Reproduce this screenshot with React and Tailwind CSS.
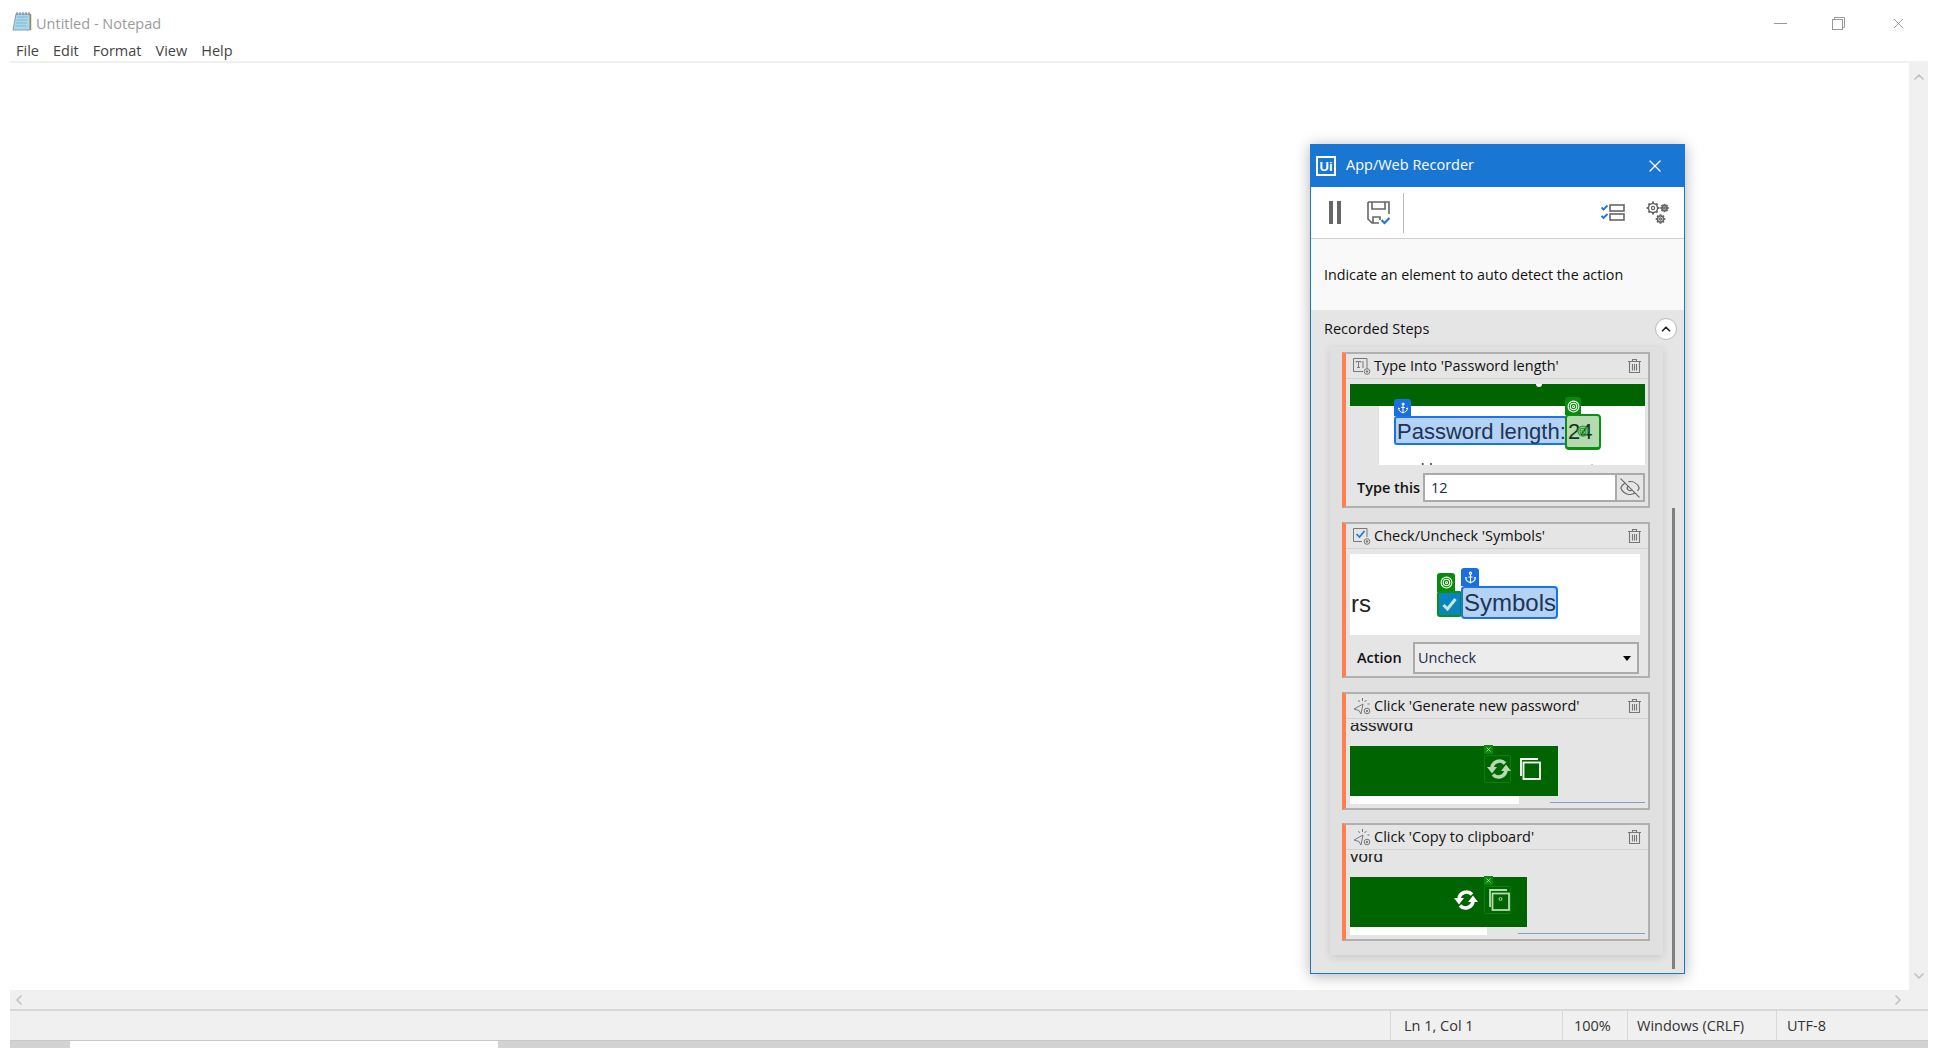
import { Anchor, ChevronDown, ChevronLeft, ChevronRight, ChevronUp, EyeOff, Target, X } from 'lucide-react'

const SEGOE = 'font-["Open_Sans",sans-serif]'
const ARIAL = 'font-["Liberation_Sans",Arial,sans-serif]'

function NotepadIcon() {
  return (
    <svg width="20" height="20" viewBox="0 0 20 20">
      <path d="M4 3h14v16H1z" fill="#a9d8ea" stroke="#7f9fb0" />
      <path d="M5 6h11M4.500 9h11M4 12h11M3.500 15h11" stroke="#7fb6d4" />
      <path d="M5 1v3M8 1v3M11 1v3M14 1v3M17 1v3" stroke="#777" />
      <path d="M18.500 3v16" stroke="#9a8a60" strokeWidth="1.500" />
    </svg>
  )
}

function RestoreIcon() {
  return (
    <svg width="13" height="13" viewBox="0 0 13 13" fill="none" stroke="#999">
      <rect x="0.500" y="2.500" width="10" height="10" fill="#fff" />
      <path d="M2.500 2.500v-2h10v10h-2" />
    </svg>
  )
}

function SaveIcon() {
  return (
    <svg width="24" height="24" viewBox="0 0 24 24" fill="none" stroke="#666" strokeWidth="1.600">
      <path d="M1 1h21v12M12 22H5l-4-4V1" />
      <path d="M5 1v7h13V1M6 22v-6h7v3" />
      <path d="M14.500 19l3 3 5-5" stroke="#1976d2" strokeWidth="2" />
    </svg>
  )
}

function StepsIcon() {
  return (
    <svg width="24" height="17" viewBox="0 0 24 17" fill="none">
      <path d="M0.500 3.500l2 2 4-4M0.500 12l2 2 4-4" stroke="#1976d2" strokeWidth="1.800" />
      <rect x="9" y="1" width="14" height="6" stroke="#666" strokeWidth="1.600" />
      <rect x="9" y="10" width="14" height="6" stroke="#666" strokeWidth="1.600" />
    </svg>
  )
}

function Gear({ x, y, r }) {
  const spokes = [0, 45, 90, 135, 180, 225, 270, 315]
  return (
    <g>
      <circle cx={x} cy={y} r={r} fill="none" stroke="#666" strokeWidth="1.500" />
      <circle cx={x} cy={y} r={r * 0.35} fill="none" stroke="#666" strokeWidth="1.200" />
      {spokes.map(a => (
        <line
          key={a}
          x1={x + r * Math.cos((a * Math.PI) / 180)}
          y1={y + r * Math.sin((a * Math.PI) / 180)}
          x2={x + (r + 1.800) * Math.cos((a * Math.PI) / 180)}
          y2={y + (r + 1.800) * Math.sin((a * Math.PI) / 180)}
          stroke="#666"
          strokeWidth="2"
        />
      ))}
    </g>
  )
}

function GearsIcon() {
  return (
    <svg width="23" height="24" viewBox="0 0 23 24">
      <Gear x={7} y={7} r={4.600} />
      <Gear x={18.500} y={7} r={2.400} />
      <Gear x={14.500} y={18} r={3} />
    </svg>
  )
}

function TrashIcon() {
  return (
    <svg width="13" height="14" viewBox="0 0 13 14" fill="none" stroke="#777" strokeWidth="1.100">
      <path d="M0 2.500h13M4.500 2.500V.5h4v2M1.500 2.500v11h10v-11M4.500 5v6.500M6.500 5v6.500M8.500 5v6.500" />
    </svg>
  )
}

function TypeIcon() {
  return (
    <svg width="18" height="17" viewBox="0 0 18 17" fill="none" stroke="#777">
      <path d="M14 11V.5H.5v13H10" />
      <path d="M3 4.500v-1h5v1M5.500 3.500v6M4 9.500h3M10 3v7" />
      <circle cx="14" cy="13.500" r="2.800" />
      <circle cx="14" cy="13.500" r="0.800" fill="#777" />
    </svg>
  )
}

function CheckIcon() {
  return (
    <svg width="18" height="17" viewBox="0 0 18 17" fill="none" stroke="#777">
      <path d="M14 9V.5H.5v13H9" />
      <path d="M3.500 6l3 3 5-6" stroke="#1976d2" strokeWidth="1.600" />
      <circle cx="14" cy="13.500" r="2.800" />
      <circle cx="14" cy="13.500" r="0.800" fill="#777" />
    </svg>
  )
}

function ClickIcon() {
  return (
    <svg width="18" height="18" viewBox="0 0 18 18" fill="none" stroke="#777">
      <path d="M1 12l9-5-2 10-2-3.500z" />
      <path d="M9.500 1v3M13.500 3l-2 2M5.500 3l1 2M14.500 7h2" />
      <circle cx="14" cy="14" r="2.800" />
      <circle cx="14" cy="14" r="0.800" fill="#777" />
    </svg>
  )
}

function RefreshGlyph({ color, left }) {
  return (
    <svg className="absolute top-[38px]" style={{ left }} width="24" height="24" viewBox="0 0 24 24" fill="none" stroke={color} strokeWidth="3.600">
      <path d="M5 11A7.500 7.500 0 0 1 18 6.500" />
      <path d="M19 13A7.500 7.500 0 0 1 6 17.500" />
      <path d="M0 10h10l-5 6.500z" fill={color} stroke="none" />
      <path d="M14 14h10l-5-6.500z" fill={color} stroke="none" />
    </svg>
  )
}

function CopyGlyph({ size, color, dot }) {
  return (
    <svg width={size} height={size} viewBox="0 0 22 22" fill="none" stroke={color} strokeWidth="1.800">
      <path d="M2 18V1h17" />
      <rect x="4.500" y="4.500" width="16.500" height="16.500" />
      {dot && <circle cx="12.500" cy="10" r="1.500" strokeWidth="1" />}
    </svg>
  )
}

function Tab({ className, children }) {
  return (
    <div className={`absolute flex items-center justify-center rounded-t-[3px] text-white ${className}`}>
      {children}
    </div>
  )
}

function PasswordThumb() {
  return (
    <div className="relative mx-[4px] mt-[5px] h-[81px] w-[295px] overflow-hidden">
      <div className="absolute left-0 top-0 h-[22px] w-[295px] bg-[#006400]" />
      <div className="absolute left-[186px] top-[-3px] size-[6px] rounded-full bg-white" />
      <div className="absolute left-[29px] top-[22px] h-[59px] w-[266px] bg-white" />
      <span className={`absolute left-[71px] top-[77px] text-[15px] leading-none text-[#222] ${ARIAL}`}>ld</span>
      <span className={`absolute left-[240px] top-[77px] text-[15px] leading-none text-[#222] ${ARIAL}`}>t</span>
      <Tab className="left-[44px] top-[15px] h-[17px] w-[17px] bg-[#1a6fe0]"><Anchor size={12} /></Tab>
      <div className={`absolute left-[44px] top-[32px] flex h-[29px] w-[173px] items-center whitespace-nowrap rounded-[3px] border-2 border-[#1a73e8] bg-[#b4d2f5] pl-[1px] pt-[1px] text-[22px] text-[#1c3557] ${ARIAL}`}>
        Password length:
      </div>
      <Tab className="left-[215px] top-[13px] h-[18px] w-[16px] bg-[#0a8a0a]"><Target size={13} /></Tab>
      <div className={`absolute left-[215px] top-[30px] flex h-[36px] w-[36px] items-center rounded-[4px] border-2 border-b-[3px] border-[#0c9013] bg-[#b5dab0] pl-[1px] text-[22px] text-[#17331a] ${ARIAL}`}>
        24
      </div>
      <Target size={12} strokeWidth={2.500} className="absolute left-[227px] top-[41px] text-[#2f9e3a]" />
    </div>
  )
}

function SymbolsThumb() {
  return (
    <div className="relative mx-[4px] mt-[5px] h-[81px] w-[290px] overflow-hidden bg-white">
      <span className={`absolute left-[1px] top-[36px] text-[24px] leading-[28px] text-[#222] ${ARIAL}`}>rs</span>
      <Tab className="left-[87px] top-[19px] h-[19px] w-[18px] bg-[#0a8a0a]"><Target size={13} /></Tab>
      <div className="absolute left-[87px] top-[37px] flex h-[26px] w-[25px] items-center justify-center rounded-[3px] border-2 border-[#0c9013] bg-[#0a84c0]">
        <svg width="15" height="13" viewBox="0 0 15 13" fill="none" stroke="#c9e8d0" strokeWidth="3">
          <path d="M1.500 7l4 4 8-10" />
        </svg>
      </div>
      <Tab className="left-[111px] top-[14px] h-[18px] w-[18px] bg-[#1a6fe0]"><Anchor size={13} /></Tab>
      <div className={`absolute left-[111px] top-[32px] flex h-[33px] w-[97px] items-center rounded-[4px] border-2 border-[#1a73e8] bg-[#b4d2f5] pl-[1px] text-[24px] text-[#1c3557] ${ARIAL}`}>
        Symbols
      </div>
    </div>
  )
}

function ClickThumb({ word, greenW, whiteW, lineX, refreshX, refreshActive }) {
  return (
    <div className="relative ml-[4px] h-[85px] w-[295px] overflow-hidden">
      <div className="absolute left-0 top-[4px] h-[12px] w-[120px] overflow-hidden">
        <span className={`absolute left-0 top-[-7px] text-[17px] leading-[20px] text-[#222] ${ARIAL}`}>{word}</span>
      </div>
      <div className="absolute left-0 top-[27px] h-[50px] bg-[#006400]" style={{ width: greenW }} />
      <div className="absolute left-0 top-[77px] h-[8px] bg-white" style={{ width: whiteW }} />
      <div className="absolute right-0 top-[83px] h-[1px] bg-[#7f9fc4]" style={{ left: lineX }} />
      <div className="absolute left-[134px] top-[26px] flex size-[9px] items-center justify-center bg-[#0a8a0a]">
        <X size={7} className="text-white" />
      </div>
      <div className="absolute left-[134px] top-[36px] h-[28px] w-[27px] rounded-[2px] border border-[#0a7f0a]" />
      {refreshActive ? (
        <>
          <RefreshGlyph color="#b5dab0" left={refreshX} />
          <div className="absolute left-[169px] top-[39px]"><CopyGlyph size={22} color="#ffffff" /></div>
        </>
      ) : (
        <>
          <RefreshGlyph color="#ffffff" left={refreshX} />
          <div className="absolute left-[138px] top-[39px]"><CopyGlyph size={22} color="#b5dab0" dot /></div>
        </>
      )}
    </div>
  )
}

function Card({ icon: Icon, title, className = '', children }) {
  return (
    <div className={`border-2 border-l-4 border-[#b0b0b0] border-l-[#ff7f50] bg-[#e5e5e5] ${className}`}>
      <div className="flex h-[25px] items-center border-b border-[#d2d2d2] pl-[7px] pr-[7px]">
        <Icon />
        <span className={`ml-[3px] flex-1 whitespace-nowrap text-[14.5px] text-[#111] ${SEGOE}`}>{title}</span>
        <TrashIcon />
      </div>
      {children}
    </div>
  )
}

function RecorderWindow() {
  return (
    <div className={`absolute left-[1310px] top-[144px] flex h-[830px] w-[375px] flex-col border border-[#1976d2] bg-[#e5e5e5] shadow-[0_2px_14px_rgba(0,0,0,0.3)] ${SEGOE}`}>
      <div className="flex h-[42px] shrink-0 items-center bg-[#1976d2] pl-[5px] pr-[19px] text-white">
        <div className={`flex size-[20px] items-center justify-center border-2 border-white text-[13px] font-bold leading-none ${ARIAL}`}>
          Ui
        </div>
        <span className="ml-[10px] flex-1 pb-[3px] text-[14.5px]">App/Web Recorder</span>
        <X size={20} strokeWidth={1.500} />
      </div>

      <div className="flex h-[52px] shrink-0 items-center border-b border-[#d0d0d0] bg-white pl-[18px] pr-[15px]">
        <div className="flex h-[23px] gap-[4px]">
          <div className="w-[4px] bg-[#666]" />
          <div className="w-[4px] bg-[#666]" />
        </div>
        <div className="ml-[26px]"><SaveIcon /></div>
        <div className="ml-[12px] h-[40px] w-[1px] bg-[#bbb]" />
        <div className="ml-auto"><StepsIcon /></div>
        <div className="ml-[21px]"><GearsIcon /></div>
      </div>

      <div className="flex h-[71px] shrink-0 items-center bg-[#f9f9f9] pl-[13px] text-[14.3px] text-[#111]">
        Indicate an element to auto detect the action
      </div>

      <div className="relative flex min-h-0 flex-1 flex-col">
        <div className="flex h-[37px] shrink-0 items-center justify-between pl-[13px] pr-[7px]">
          <span className="text-[14.5px] text-[#111]">Recorded Steps</span>
          <div className="flex size-[22px] items-center justify-center rounded-full border border-[#bbb] bg-white">
            <ChevronUp size={14} strokeWidth={3} className="text-[#222]" />
          </div>
        </div>
        <div className="ml-[19px] flex h-[608px] w-[333px] flex-col gap-[14px] bg-[#e0e0e0] pl-[12px] pr-[13px] pt-[5px] shadow-[0_2px_8px_rgba(0,0,0,0.12)]">
          <Card icon={TypeIcon} title="Type Into 'Password length'">
            <PasswordThumb />
            <div className="mb-[4px] mt-[8px] flex h-[29px] items-center pl-[11px]">
              <span className="w-[66px] whitespace-nowrap text-[14.5px] font-semibold text-[#111]">Type this</span>
              <div className="flex h-[29px] w-[194px] items-center border-2 border-[#aaa] bg-white pl-[6px] text-[14.5px] text-[#1c2a4a]">12</div>
              <div className="flex h-[29px] w-[28px] items-center justify-center border-2 border-l-0 border-[#aaa] bg-[#e5e5e5]">
                <EyeOff size={22} strokeWidth={1.200} className="text-[#666]" />
              </div>
            </div>
          </Card>

          <Card icon={CheckIcon} title="Check/Uncheck 'Symbols'">
            <SymbolsThumb />
            <div className="mb-[2px] mt-[7px] flex h-[32px] items-center pl-[11px]">
              <span className="w-[56px] text-[14.5px] font-semibold text-[#111]">Action</span>
              <div className="flex h-[32px] w-[226px] items-center justify-between border-2 border-[#aaa] bg-[#ececec] pl-[3px] pr-[6px] text-[14.5px] text-[#1c2a4a]">
                Uncheck
                <div className="size-0 border-x-[4px] border-t-[5px] border-x-transparent border-t-black" />
              </div>
            </div>
          </Card>

          <Card icon={ClickIcon} title="Click 'Generate new password'">
            <ClickThumb word="assword" greenW={208} whiteW={169} lineX={200} refreshX={137} refreshActive />
            <div className="h-[4px]" />
          </Card>

          <Card icon={ClickIcon} title="Click 'Copy to clipboard'" className="mt-[-1px]">
            <ClickThumb word="vord" greenW={177} whiteW={137} lineX={168} refreshX={104} />
            <div className="h-[4px]" />
          </Card>
        </div>
        <div className="absolute bottom-[4px] left-[361px] top-[198px] w-[3px] bg-[#808080]" />
      </div>
    </div>
  )
}

export default function App() {
  return (
    <div className={`relative flex h-[1048px] w-[1938px] flex-col overflow-hidden bg-white pl-[10px] pr-[10px] text-[14.5px] ${SEGOE}`}>
      <div className="flex h-[41px] shrink-0 items-center">
        <div className="ml-[2px]"><NotepadIcon /></div>
        <span className="ml-[4px] pt-[6px] text-[#9a9a9a]">Untitled - Notepad</span>
        <div className="ml-auto flex items-center pr-[21px] pt-[5px]">
          <div className="h-[1px] w-[13px] bg-[#999]" />
          <div className="ml-[45px]"><RestoreIcon /></div>
          <X size={17} strokeWidth={1} className="ml-[45px] text-[#777]" />
        </div>
      </div>

      <div className="flex h-[22px] shrink-0 items-center gap-[14px] border-b-2 border-[#f0f0f0] pl-[6px] text-[#444]">
        <span>File</span>
        <span>Edit</span>
        <span>Format</span>
        <span>View</span>
        <span>Help</span>
      </div>

      <div className="flex min-h-0 flex-1 justify-end">
        <div className="flex w-[19px] flex-col items-center justify-between bg-[#f0f0f0] py-[6px]">
          <ChevronUp size={16} strokeWidth={2.500} className="text-[#c0c0c0]" />
          <ChevronDown size={16} strokeWidth={2.500} className="text-[#c0c0c0]" />
        </div>
      </div>

      <div className="flex h-[21px] shrink-0 items-center justify-between border-b-2 border-[#d8d8d8] bg-[#f0f0f0] pl-[1px] pr-[22px]">
        <ChevronLeft size={16} strokeWidth={2.500} className="text-[#c0c0c0]" />
        <ChevronRight size={16} strokeWidth={2.500} className="text-[#c0c0c0]" />
      </div>

      <div className="flex h-[29px] shrink-0 items-center justify-end bg-[#f0f0f0] text-[#333]">
        <div className="flex h-full w-[172px] items-center border-l border-[#d8d8d8] pl-[13px]">Ln 1, Col 1</div>
        <div className="flex h-full w-[65px] items-center border-l border-[#d8d8d8] pl-[11px]">100%</div>
        <div className="flex h-full w-[149px] items-center border-l border-[#d8d8d8] pl-[9px]">Windows (CRLF)</div>
        <div className="flex h-full w-[152px] items-center border-l border-[#d8d8d8] pl-[10px]">UTF-8</div>
      </div>

      <div className="relative h-[8px] shrink-0 overflow-hidden border-t border-[#c8c8c8] bg-[#d2d2d2]">
        <div className="absolute left-[60px] top-0 h-[8px] w-[428px] bg-white" />
      </div>

      <RecorderWindow />
    </div>
  )
}
